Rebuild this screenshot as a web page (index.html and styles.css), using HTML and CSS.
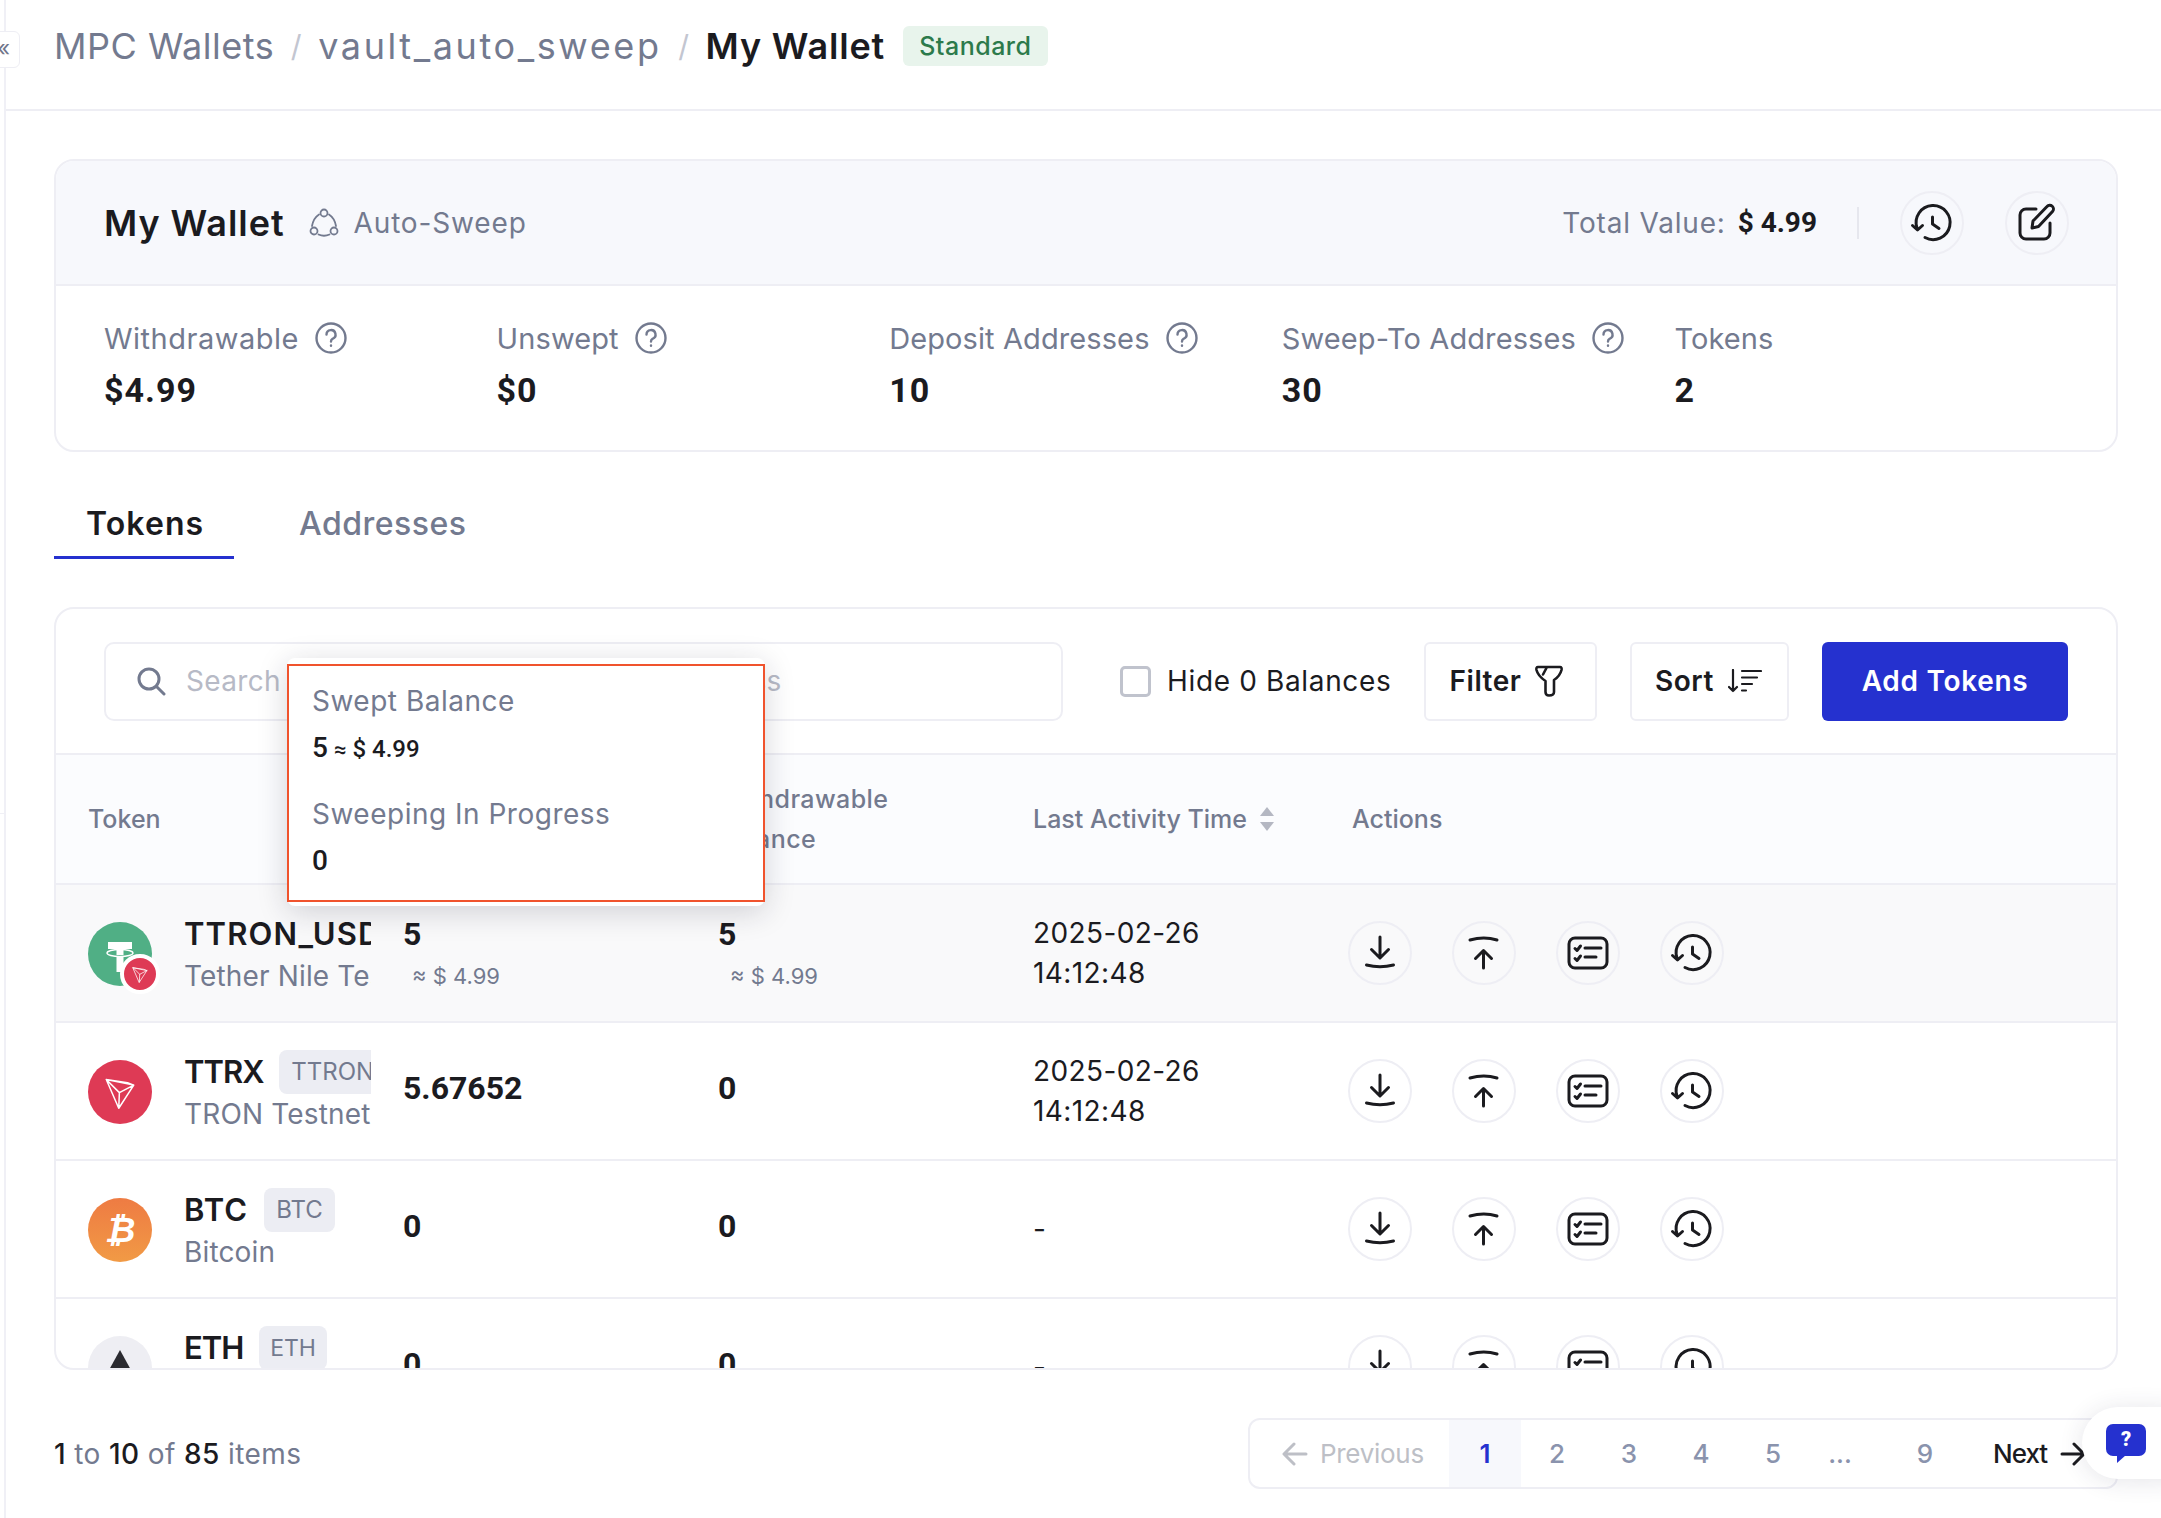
FILE: index.html
```html
<!DOCTYPE html>
<html lang="en">
<head>
  <meta charset="UTF-8" />
  <title>My Wallet</title>
  <link rel="stylesheet" href="styles.css">
</head>
<body>
  <svg class="defs" width="0" height="0">
    <symbol id="i-down" viewBox="0 0 64 64"><path d="M32 16V36M23.5 28.5L32 37L40.500 28.500M18.500 44Q32 47.500 45.500 44"/></symbol>
    <symbol id="i-up" viewBox="0 0 64 64"><path d="M18 19Q32 15 45 19M31.500 30V47M23.500 37.500L31.500 29.500L39.500 37.500"/></symbol>
    <symbol id="i-list" viewBox="0 0 64 64"><rect x="13" y="17" width="38" height="30" rx="6"/><path d="M19 27.500L21 29.500L24.500 25M19 37.500L21 39.500L24.500 35M29 27H45M29 36H40"/></symbol>
    <symbol id="i-history" viewBox="0 0 64 64"><path d="M17 37A17 17 0 1 1 25 46.500M32.500 26V33L39 37.500M12.500 34.500L17.500 39L22.500 34.500"/></symbol>
    <symbol id="i-help" viewBox="0 0 32 32"><circle cx="16" cy="16" r="14.500"/><path d="M11.500 12.500A4.500 4.500 0 1 1 17.500 16.800Q16 17.500 16 19.500"/><path class="dot" d="M16 23.500V23.700"/></symbol>
    <symbol id="i-tron" viewBox="0 0 32 32"><path d="M5 6L27 10.500L15 29ZM5 6L15.500 16.500L15 29M15.500 16.500L27 10.500M5 6L22 8.500L27 10.500"/></symbol>
  </svg>

  <div class="sidebar-edge"></div>
  <button class="collapse-btn">«</button>

  <!-- Chat help -->
  <div class="chat-widget">
    <div class="chat-bubble">?</div>
  </div>

  <main class="page">
    <header class="topbar">
      <nav class="crumbs">
        <span class="crumb">MPC Wallets</span>
        <span class="crumb-sep">/</span>
        <span class="crumb c-vault">vault_auto_sweep</span>
        <span class="crumb-sep">/</span>
        <span class="crumb-current">My Wallet</span>
        <span class="badge-standard">Standard</span>
      </nav>
    </header>

    <div class="content">
      <!-- Wallet summary -->
      <section class="wallet-card">
        <div class="wallet-head">
          <h1>My Wallet</h1>
          <svg class="sweep-icon" width="32" height="32" viewBox="0 0 32 32"><circle cx="16" cy="6" r="3.500"/><circle cx="6" cy="24" r="3.500"/><circle cx="26" cy="24" r="3.500"/><path d="M11 7.500Q5.500 11 4 19M21 7.500Q26.500 11 28 19M10.500 27.500Q16 30 21.500 27.500"/></svg>
          <span class="wallet-type">Auto-Sweep</span>
          <div class="wallet-total">
            <span class="total-label">Total Value:</span>
            <span class="total-value">$ 4.99</span>
            <span class="v-divider"></span>
            <button class="round-btn on-tint"><svg width="64" height="64"><use href="#i-history"/></svg></button>
            <button class="round-btn on-tint"><svg width="64" height="64" viewBox="0 0 64 64"><path d="M31 18H21A6 6 0 0 0 15 24V42A6 6 0 0 0 21 48H39A6 6 0 0 0 45 42V32M27 37L28 30L42 15.500A3.200 3.200 0 0 1 47.500 20.500L33.500 35.500Z"/></svg></button>
          </div>
        </div>
        <div class="stats">
          <div class="stat">
            <div class="stat-label">Withdrawable <svg class="help" width="32" height="32"><use href="#i-help"/></svg></div>
            <div class="stat-value">$4.99</div>
          </div>
          <div class="stat">
            <div class="stat-label">Unswept <svg class="help" width="32" height="32"><use href="#i-help"/></svg></div>
            <div class="stat-value">$0</div>
          </div>
          <div class="stat">
            <div class="stat-label">Deposit Addresses <svg class="help" width="32" height="32"><use href="#i-help"/></svg></div>
            <div class="stat-value">10</div>
          </div>
          <div class="stat">
            <div class="stat-label">Sweep-To Addresses <svg class="help" width="32" height="32"><use href="#i-help"/></svg></div>
            <div class="stat-value">30</div>
          </div>
          <div class="stat">
            <div class="stat-label">Tokens</div>
            <div class="stat-value">2</div>
          </div>
        </div>
      </section>

      <div class="tabs">
        <div class="tab active">Tokens</div>
        <div class="tab">Addresses</div>
      </div>

      <!-- Token table -->
      <section class="table-card">
        <div class="toolbar">
          <div class="search">
            <svg width="30" height="30" viewBox="0 0 30 30"><circle cx="13" cy="13" r="10"/><path d="M20.500 20.500L28 28"/></svg>
            <span class="search-text">Search by Token Name or Contract Address</span>
          </div>
          <label class="hide-zero"><span class="checkbox"></span>Hide 0 Balances</label>
          <button class="tool-btn filter-btn">Filter
            <svg width="28" height="32" viewBox="0 0 28 32"><path d="M3 2H25Q27 2 26.500 5Q25 11 19 15V27Q19 30.500 14 30.500Q10.500 30.500 10.500 27V16Q3 11 1.500 5Q1 2 3 2ZM12 2L8 9.500"/></svg>
          </button>
          <button class="tool-btn sort-btn">Sort
            <svg width="34" height="24" viewBox="0 0 34 24"><path d="M5 1V22M1 18L5 22L9 18M14 2H33M14 8.500H29M14 15H24M14 21.500H18"/></svg>
          </button>
          <button class="add-btn">Add Tokens</button>
        </div>

        <table class="token-table">
          <thead>
            <tr>
              <th class="col-token">Token</th>
              <th class="col-num">Balance</th>
              <th class="col-num"><span class="wrap-head">Withdrawable Balance</span></th>
              <th class="col-time">Last Activity Time <span class="sorter"><i class="up"></i><i class="dn"></i></span></th>
              <th class="col-actions"><span class="actions-head">Actions</span></th>
            </tr>
          </thead>
          <tbody>
            <tr class="hovered">
              <td class="col-token">
                <div class="token">
                  <div class="logo logo-usdt">
                    <svg width="64" height="64" viewBox="0 0 64 64"><path class="fill-w" d="M20 20H44V27H35.500V33H28.500V27H20ZM28.500 34H35.500V50H28.500Z"/><ellipse cx="32" cy="31" rx="13" ry="3.500"/></svg>
                    <span class="chain-badge"><svg width="20" height="20"><use href="#i-tron"/></svg></span>
                  </div>
                  <div class="token-info">
                    <div class="token-name"><span class="wide">TTRON_USDT</span> <span class="tag">TTRON</span></div>
                    <div class="token-sub">Tether Nile Testnet</div>
                  </div>
                </div>
              </td>
              <td class="col-num has-sub"><div class="num">5</div><div class="approx">≈ $ 4.99</div></td>
              <td class="col-num has-sub"><div class="num">5</div><div class="approx second">≈ $ 4.99</div></td>
              <td class="col-time">2025-02-26<br>14:12:48</td>
              <td class="col-actions">
                <div class="actions">
                  <button class="round-btn"><svg width="64" height="64"><use href="#i-down"/></svg></button>
                  <button class="round-btn"><svg width="64" height="64"><use href="#i-up"/></svg></button>
                  <button class="round-btn"><svg width="64" height="64"><use href="#i-list"/></svg></button>
                  <button class="round-btn"><svg width="64" height="64"><use href="#i-history"/></svg></button>
                </div>
              </td>
            </tr>
            <tr>
              <td class="col-token">
                <div class="token">
                  <div class="logo logo-tron"><svg width="40" height="40"><use href="#i-tron"/></svg></div>
                  <div class="token-info">
                    <div class="token-name"><span class="tight">TTRX</span> <span class="tag">TTRON</span></div>
                    <div class="token-sub">TRON Testnet</div>
                  </div>
                </div>
              </td>
              <td class="col-num"><div class="num">5.67652</div></td>
              <td class="col-num"><div class="num">0</div></td>
              <td class="col-time">2025-02-26<br>14:12:48</td>
              <td class="col-actions">
                <div class="actions">
                  <button class="round-btn"><svg width="64" height="64"><use href="#i-down"/></svg></button>
                  <button class="round-btn"><svg width="64" height="64"><use href="#i-up"/></svg></button>
                  <button class="round-btn"><svg width="64" height="64"><use href="#i-list"/></svg></button>
                  <button class="round-btn"><svg width="64" height="64"><use href="#i-history"/></svg></button>
                </div>
              </td>
            </tr>
            <tr>
              <td class="col-token">
                <div class="token">
                  <div class="logo logo-btc">₿</div>
                  <div class="token-info">
                    <div class="token-name"><span class="wide">BTC</span> <span class="tag">BTC</span></div>
                    <div class="token-sub">Bitcoin</div>
                  </div>
                </div>
              </td>
              <td class="col-num"><div class="num">0</div></td>
              <td class="col-num"><div class="num">0</div></td>
              <td class="col-time">-</td>
              <td class="col-actions">
                <div class="actions">
                  <button class="round-btn"><svg width="64" height="64"><use href="#i-down"/></svg></button>
                  <button class="round-btn"><svg width="64" height="64"><use href="#i-up"/></svg></button>
                  <button class="round-btn"><svg width="64" height="64"><use href="#i-list"/></svg></button>
                  <button class="round-btn"><svg width="64" height="64"><use href="#i-history"/></svg></button>
                </div>
              </td>
            </tr>
            <tr>
              <td class="col-token">
                <div class="token">
                  <div class="logo logo-eth"><svg width="64" height="64" viewBox="0 0 64 64"><path d="M32 14L21 34L32 40L43 34Z"/></svg></div>
                  <div class="token-info">
                    <div class="token-name"><span class="tight">ETH</span> <span class="tag tag-eth">ETH</span></div>
                    <div class="token-sub">Ethereum</div>
                  </div>
                </div>
              </td>
              <td class="col-num"><div class="num">0</div></td>
              <td class="col-num"><div class="num">0</div></td>
              <td class="col-time">-</td>
              <td class="col-actions">
                <div class="actions">
                  <button class="round-btn"><svg width="64" height="64"><use href="#i-down"/></svg></button>
                  <button class="round-btn"><svg width="64" height="64"><use href="#i-up"/></svg></button>
                  <button class="round-btn"><svg width="64" height="64"><use href="#i-list"/></svg></button>
                  <button class="round-btn"><svg width="64" height="64"><use href="#i-history"/></svg></button>
                </div>
              </td>
            </tr>
          </tbody>
        </table>

        <!-- Balance tooltip -->
        <div class="popover">
          <div class="popover-inner">
            <div class="pop-label">Swept Balance</div>
            <div class="pop-value"><b>5</b> <small>≈</small> $ 4.99</div>
            <div class="pop-label second">Sweeping In Progress</div>
            <div class="pop-value"><b>0</b></div>
          </div>
        </div>
      </section>

      <div class="footer-row">
        <div class="count"><b>1</b> to <b>10</b> of <b>85</b> items</div>
        <div class="pager">
          <div class="pg-prev">
            <svg width="26" height="24" viewBox="0 0 26 24"><path d="M24 12H3M12 2L2 12L12 22"/></svg>
            Previous
          </div>
          <div class="pg-cell current">1</div>
          <div class="pg-cell">2</div>
          <div class="pg-cell">3</div>
          <div class="pg-cell">4</div>
          <div class="pg-cell">5</div>
          <div class="pg-cell dots">...</div>
          <div class="pg-cell last">9</div>
          <div class="pg-next">Next
            <svg width="26" height="24" viewBox="0 0 26 24"><path d="M2 12H23M14 2L24 12L14 22"/></svg>
          </div>
        </div>
      </div>
    </div>
  </main>
</body>
</html>
```

FILE: styles.css
```css
* {
  box-sizing: border-box;
}

html, body {
  margin: 0;
  height: 100%;
}

body {
  position: relative;
  width: 2161px;
  height: 1518px;
  overflow: hidden;
  background: #fff;
  color: #1b1b1f;
  font-family: 'Inter', sans-serif;
  font-size: 27px;
}

button {
  font-family: inherit;
  cursor: pointer;
}

svg {
  fill: none;
  stroke: currentColor;
  stroke-width: 3;
  stroke-linecap: round;
  stroke-linejoin: round;
  flex: none;
}

.defs {
  position: absolute;
}

.sidebar-edge {
  position: absolute;
  left: 4px;
  top: 0;
  width: 2px;
  height: 100%;
  background: #f0f0f6;
}

.sidebar-edge::after {
  content: '';
  position: absolute;
  left: -4px;
  top: 813px;
  width: 4px;
  height: 1px;
  background: #f0f0f6;
}

.collapse-btn {
  position: absolute;
  left: -18px;
  top: 31px;
  width: 38px;
  height: 37px;
  padding: 0 9px 4px 0;
  border: 1px solid #eeeef4;
  border-radius: 6px;
  background: #fff;
  color: #70758a;
  font-size: 22px;
  line-height: 1;
  text-align: right;
}

.chat-widget {
  position: absolute;
  right: -40px;
  top: 1407px;
  z-index: 5;
  width: 119px;
  height: 72px;
  padding: 17px 0 0 24px;
  border-radius: 36px;
  background: #fff;
  box-shadow: 0 2px 24px rgba(40, 40, 70, 0.12);
}

.chat-bubble {
  position: relative;
  width: 40px;
  height: 32px;
  border-radius: 7px;
  background: #2531cf;
  color: #fff;
  font-family: 'Roboto', sans-serif;
  font-weight: 900;
  font-size: 20px;
  line-height: 30px;
  text-align: center;
}

.chat-bubble::after {
  content: '';
  position: absolute;
  left: 11px;
  bottom: -7px;
  border-top: 8px solid #2531cf;
  border-right: 9px solid transparent;
}

.page {
  margin-left: 5px;
}

/* top breadcrumb bar */
.topbar {
  height: 111px;
  padding: 0 49px;
  border-bottom: 2px solid #eeeef4;
  display: flex;
  align-items: center;
}

.crumbs {
  display: flex;
  align-items: center;
  height: 46px;
  margin-top: -18px;
  font-size: 36px;
  white-space: nowrap;
}

.crumb {
  color: #737a8f;
  letter-spacing: 0.5px;
}

.c-vault {
  letter-spacing: 2.6px;
}

.crumb-sep {
  width: 44px;
  text-align: center;
  color: #c3c6d1;
  font-size: 30px;
}

.crumb-current {
  font-weight: 600;
  letter-spacing: 0.85px;
}

.badge-standard {
  margin-left: 18px;
  height: 40px;
  padding: 0 16px;
  border-radius: 6px;
  background: #e8f4ec;
  color: #2c7a4b;
  font-size: 25px;
  line-height: 40px;
  font-weight: 500;
  letter-spacing: 0.5px;
}

.content {
  padding: 48px 43px 0 49px;
}

/* wallet summary card */
.wallet-card {
  height: 293px;
  border: 2px solid #eeeef4;
  border-radius: 20px;
  overflow: hidden;
}

.wallet-head {
  height: 125px;
  padding: 0 47px 0 48px;
  background: #f7f8fc;
  border-bottom: 2px solid #eeeef4;
  display: flex;
  align-items: center;
}

.wallet-head h1 {
  margin: 0;
  font-size: 36px;
  font-weight: 600;
  letter-spacing: 0.95px;
}

.sweep-icon {
  margin-left: 23px;
  color: #737a8f;
  stroke-width: 1.8;
}

.wallet-type {
  margin-left: 14px;
  color: #737a8f;
  font-size: 28px;
  letter-spacing: 0.85px;
}

.wallet-total {
  margin-left: auto;
  display: flex;
  align-items: center;
}

.total-label {
  color: #737a8f;
  font-size: 28px;
  letter-spacing: 0.8px;
}

.total-value {
  margin-left: 12px;
  font-family: 'Roboto', sans-serif;
  font-size: 28px;
  font-weight: 700;
}

.v-divider {
  width: 2px;
  height: 32px;
  margin: 0 41px 0 40px;
  background: #e6e7ee;
}

.round-btn {
  width: 64px;
  height: 64px;
  padding: 0;
  border: 2px solid #eeeef4;
  border-radius: 50%;
  background: transparent;
  color: #1b1b1f;
  display: flex;
  align-items: center;
  justify-content: center;
}

.round-btn svg {
  margin: -2px;
}

.on-tint + .on-tint {
  margin-left: 41px;
}

.stats {
  padding: 34px 48px 0;
  display: grid;
  grid-template-columns: repeat(5, 392.6px);
}

.stat-label {
  height: 36px;
  display: flex;
  align-items: center;
  gap: 16px;
  color: #737a8f;
  font-size: 29px;
  letter-spacing: 0.1px;
  white-space: nowrap;
}

.stat:first-child .stat-label {
  letter-spacing: 0.5px;
}

.help {
  color: #737a8f;
  stroke-width: 2.4;
}

.stat-value {
  margin-top: 12px;
  font-family: 'Roboto', sans-serif;
  font-size: 34px;
  font-weight: 700;
  line-height: 44px;
  letter-spacing: 1px;
}

/* tabs */
.tabs {
  height: 107px;
  padding-top: 32px;
  display: flex;
  align-items: stretch;
}

.tab {
  height: 75px;
  padding-top: 20px;
  padding-left: 65px;
  color: #737a8f;
  font-size: 32px;
  font-weight: 500;
  letter-spacing: 0.5px;
}

.tab.active {
  width: 180px;
  padding-left: 32px;
  color: #1b1b1f;
  font-weight: 600;
  letter-spacing: 1.1px;
  border-bottom: 3px solid #2531cf;
}

/* token table card */
.table-card {
  position: relative;
  height: 763px;
  margin-top: 48px;
  border: 2px solid #eeeef4;
  border-radius: 20px;
  overflow: hidden;
}

.toolbar {
  height: 146px;
  padding: 0 48px 0 48px;
  border-bottom: 2px solid #eeeef4;
  display: flex;
  align-items: center;
}

.search {
  width: 959px;
  height: 79px;
  padding-left: 30px;
  border: 2px solid #eeeef4;
  border-radius: 10px;
  display: flex;
  align-items: center;
  gap: 20px;
  color: #737a8f;
}

.search-text {
  color: #b7bac6;
  font-size: 28px;
  letter-spacing: 0.35px;
  white-space: nowrap;
}

.hide-zero {
  margin-left: 57px;
  display: flex;
  align-items: center;
  gap: 16px;
  font-size: 28px;
  letter-spacing: 0.65px;
  white-space: nowrap;
}

.checkbox {
  width: 31px;
  height: 31px;
  border: 3px solid #c0c3cd;
  border-radius: 5px;
}

.tool-btn {
  height: 79px;
  border: 2px solid #eeeef4;
  border-radius: 6px;
  background: #fff;
  color: #1b1b1f;
  font-size: 28px;
  font-weight: 600;
  letter-spacing: 0.5px;
  display: flex;
  align-items: center;
  justify-content: center;
  gap: 14px;
}

.filter-btn {
  width: 173px;
  margin-left: auto;
  padding: 0 8px 0 0;
}

.filter-btn svg {
  stroke-width: 2.6;
}

.sort-btn {
  width: 159px;
  margin-left: 33px;
  padding: 0 2px 0 0;
}

.sort-btn svg {
  stroke-width: 2.2;
}

.add-btn {
  width: 246px;
  height: 79px;
  margin-left: 33px;
  border: none;
  border-radius: 6px;
  background: #2531cf;
  color: #fff;
  font-size: 28px;
  font-weight: 600;
  letter-spacing: 0.7px;
}

.token-table {
  width: 100%;
  border-collapse: separate;
  border-spacing: 0;
  table-layout: fixed;
}

th, td {
  padding: 0;
  text-align: left;
  border-bottom: 2px solid #eeeef4;
}

th {
  height: 130px;
  background: #fbfcfe;
  color: #737a8f;
  font-size: 25px;
  font-weight: 500;
  line-height: 40px;
}

td {
  height: 138px;
  font-size: 28px;
}

.hovered td {
  background: #f9f9fa;
}

th.col-token, td.col-token {
  width: 347px;
  padding-left: 32px;
}

.col-num {
  width: 315px;
}

.col-time {
  width: 315px;
  line-height: 40px;
  letter-spacing: 0.4px;
}

th.col-time {
  letter-spacing: 0;
}

.wrap-head {
  display: block;
  width: 200px;
  letter-spacing: 0.4px;
}

.sorter {
  display: inline-block;
  width: 12px;
  height: 24px;
  margin-left: 6px;
  position: relative;
  top: 3px;
}

.sorter i {
  position: absolute;
  left: 0;
  border-left: 7px solid transparent;
  border-right: 7px solid transparent;
}

.sorter .up {
  top: 0;
  border-bottom: 9px solid #b4b7c2;
}

.sorter .dn {
  bottom: 0;
  border-top: 9px solid #b4b7c2;
}

.actions-head {
  padding-left: 4px;
}

.actions {
  display: flex;
  gap: 40px;
}

.token {
  display: flex;
  align-items: center;
  gap: 32px;
  margin-top: 2px;
}

.logo {
  position: relative;
  width: 64px;
  height: 64px;
  border-radius: 50%;
  flex: none;
  display: flex;
  align-items: center;
  justify-content: center;
  color: #fff;
}

.logo-usdt {
  background: #50af85;
}

.logo-usdt svg {
  stroke-width: 1.4;
}

.fill-w {
  fill: #fff;
  stroke: none;
}

.chain-badge {
  position: absolute;
  left: 32px;
  top: 32px;
  width: 40px;
  height: 40px;
  border: 4px solid #fff;
  border-radius: 50%;
  background: #de3a55;
  display: flex;
  align-items: center;
  justify-content: center;
}

.chain-badge svg, .logo-tron svg {
  stroke-width: 1.2;
}

.logo-tron {
  background: #de3a55;
}

.logo-btc {
  background: linear-gradient(#ee7b43, #f19a45);
  font-family: 'DejaVu Sans', sans-serif;
  font-size: 35px;
  font-weight: 700;
  font-style: italic;
}

.logo-eth {
  background: #eeeef3;
}

.logo-eth svg {
  fill: #2b2b30;
  stroke: none;
}

.token-info {
  width: 187px;
  overflow: hidden;
  white-space: nowrap;
}

.token-name {
  height: 44px;
  font-size: 31px;
  font-weight: 600;
  line-height: 44px;
}

.wide {
  letter-spacing: 1.1px;
}

.tight {
  letter-spacing: -1px;
}

.tag {
  display: inline-block;
  height: 44px;
  margin-left: 8px;
  padding: 0 12px;
  border-radius: 8px;
  background: #ecedf3;
  color: #737a8f;
  font-size: 24px;
  font-weight: 400;
  line-height: 44px;
  vertical-align: top;
}

.tag-eth {
  padding: 0 11px;
  font-size: 23px;
}

.token-sub {
  height: 41px;
  color: #737a8f;
  font-size: 28px;
  line-height: 41px;
  letter-spacing: 0.15px;
}

.num {
  margin-top: -6px;
  font-family: 'Roboto', sans-serif;
  font-size: 32px;
  font-weight: 700;
  line-height: 40px;
}

.has-sub .num {
  margin-top: -1px;
}

.approx {
  margin: 7px 0 0 9px;
  color: #737a8f;
  font-size: 22px;
  line-height: 30px;
}

.approx.second {
  margin-left: 12px;
}

/* swept balance tooltip */
.popover {
  position: absolute;
  left: 231px;
  top: 49px;
  z-index: 3;
  width: 478px;
  height: 248px;
  padding: 6px 0 4px;
  border-radius: 8px;
  background: #fff;
  box-shadow: 0 6px 30px rgba(30, 30, 50, 0.18);
}

.popover-inner {
  height: 100%;
  padding: 15px 23px 0;
  border: 2px solid #f0532d;
}

.pop-label {
  height: 40px;
  color: #737a8f;
  font-size: 28px;
  line-height: 40px;
  letter-spacing: 0.5px;
}

.pop-label.second {
  margin-top: 26px;
}

.pop-value {
  height: 40px;
  margin-top: 7px;
  font-family: 'Roboto', sans-serif;
  font-size: 24px;
  line-height: 40px;
  font-weight: 500;
}

.pop-value b {
  font-size: 28px;
  font-weight: 500;
}

.pop-value small {
  font-size: 22px;
}

/* footer */
.footer-row {
  margin-top: 48px;
  display: flex;
  align-items: center;
  justify-content: space-between;
}

.count {
  color: #737a8f;
  font-size: 28px;
  letter-spacing: 0.4px;
}

.count b {
  color: #1b1b1f;
  font-weight: 500;
}

.pager {
  width: 870px;
  height: 71px;
  border: 2px solid #eeeef4;
  border-radius: 12px;
  display: flex;
  align-items: stretch;
  font-size: 26px;
  overflow: hidden;
}

.pg-prev {
  width: 199px;
  display: flex;
  align-items: center;
  gap: 12px;
  padding-left: 32px;
  color: #bdbfc6;
  letter-spacing: -0.3px;
}

.pg-cell {
  width: 72px;
  display: flex;
  align-items: center;
  justify-content: center;
  color: #8a93ad;
  font-weight: 500;
}

.pg-cell.current {
  background: #f7f8fc;
  color: #2531cf;
  font-weight: 600;
}

.pg-cell.dots {
  width: 62px;
}

.pg-cell.last {
  width: 108px;
}

.pg-next {
  padding-left: 14px;
  display: flex;
  align-items: center;
  gap: 13px;
  font-weight: 500;
  letter-spacing: -1px;
}
```
